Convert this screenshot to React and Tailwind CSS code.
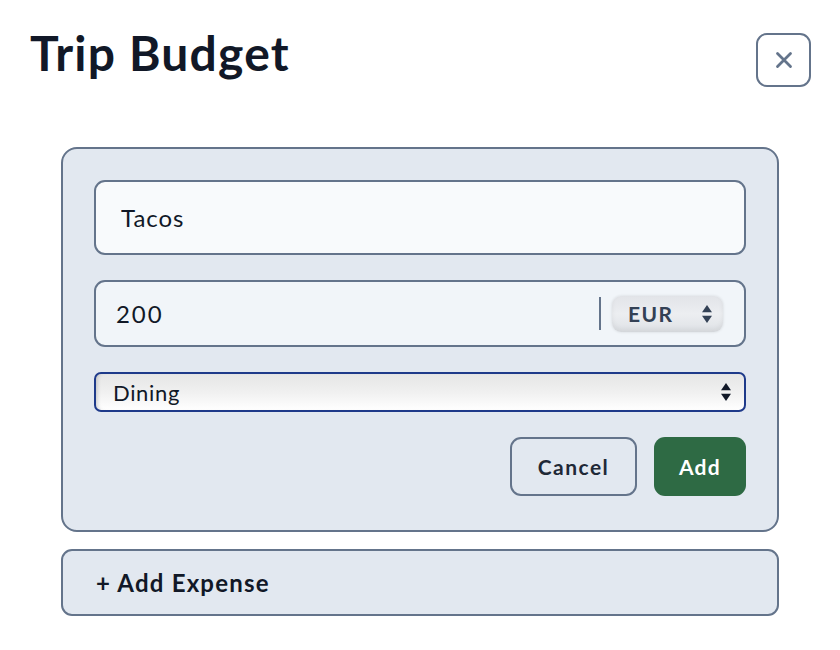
import React, { useState } from 'react';

const FONT = { fontFamily: 'Lato, "Open Sans", sans-serif' };

function UpDown({ className = '' }) {
  return (
    <svg viewBox="0 0 10 18" className={className} fill="currentColor">
      <path d="M5 1 L9.5 7.5 H0.5 Z" />
      <path d="M5 17 L9.5 10.5 H0.5 Z" />
    </svg>
  );
}

export default function App() {
  const [name, setName] = useState('Tacos');
  const [amount, setAmount] = useState('200');

  return (
    <div className="min-h-[650px] bg-white px-[30px] pt-[33px] text-[#111827]" style={FONT}>
      <div className="flex items-start justify-between h-[54px]">
        <h1 className="-mt-[4px] text-[48px] font-bold leading-none tracking-[0.025em] text-[#111827]">Trip Budget</h1>
        <button className="w-[55px] h-[54px] rounded-[11px] border-2 border-[#64748b] flex items-center justify-center text-[#64748b] mr-[-1px]">
          <svg viewBox="0 0 24 24" className="w-[26px] h-[26px]" fill="none" stroke="currentColor" strokeWidth="2.6" strokeLinecap="round">
            <path d="M6 6 L18 18 M18 6 L6 18" />
          </svg>
        </button>
      </div>

      <div className="mx-[31px] mt-[60px] flex flex-col gap-[17px]">
        <div className="rounded-[16px] border-2 border-[#64748b] bg-[#e2e8f0] px-[31px] pt-[31px] pb-[34px] flex flex-col gap-[25px]">
          <input
            value={name}
            onChange={(e) => setName(e.target.value)}
            className="h-[75px] w-full rounded-[11px] border-2 border-[#64748b] bg-[#f8fafc] px-[25px] text-[24px] tracking-[0.04em] text-[#111827] outline-none"
          />

          <div className="h-[67px] rounded-[11px] border-2 border-[#64748b] bg-[#f1f5f9] flex items-center pl-[20px] pr-[21px]">
            <input
              value={amount}
              onChange={(e) => setAmount(e.target.value)}
              className="flex-1 min-w-0 bg-transparent text-[24px] tracking-[0.08em] text-[#111827] outline-none"
            />
            <div className="w-[2px] h-[33px] bg-[#64748b] mr-[11px]" />
            <div className="w-[111px] h-[36px] rounded-[9px] bg-gradient-to-b from-[#e2e4e8] via-[#eceef1] to-[#dfe2e6] shadow-[inset_0_-3px_5px_rgba(0,0,0,0.06),0_0_3px_rgba(0,0,0,0.12)] flex items-center justify-between pl-[16px] pr-[10px]">
              <span className="text-[21px] font-bold tracking-[0.07em] text-[#334155]">EUR</span>
              <UpDown className="w-[12px] h-[20px] text-[#334155]" />
            </div>
          </div>

          <div className="h-[40px] rounded-[7px] border-2 border-[#1e3a8a] bg-gradient-to-b from-[#e6e6e6] via-[#f0f0f0] to-white shadow-[inset_4px_0_4px_-3px_rgba(0,0,0,0.2)] flex items-center justify-between pl-[17px] pr-[12px]">
            <span className="text-[22px] tracking-[0.03em] text-[#111827]">Dining</span>
            <UpDown className="w-[12px] h-[20px] text-[#111827]" />
          </div>

          <div className="flex justify-end gap-[17px]">
            <button className="w-[127px] h-[59px] rounded-[11px] border-2 border-[#64748b] bg-[#e2e8f0] text-[21px] font-bold tracking-[0.07em] text-[#1f2937]">
              Cancel
            </button>
            <button className="w-[92px] h-[59px] rounded-[11px] bg-[#2e6a44] text-[21px] font-bold tracking-[0.06em] text-white">
              Add
            </button>
          </div>
        </div>

        <button className="h-[67px] rounded-[11px] border-2 border-[#64748b] bg-[#e2e8f0] text-left pl-[33px] text-[24px] font-bold tracking-[0.05em] text-[#111827]">
          + Add Expense
        </button>
      </div>
    </div>
  );
}
